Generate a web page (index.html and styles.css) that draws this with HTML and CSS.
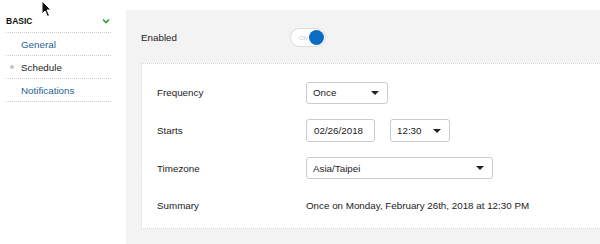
FILE: index.html
```html
<!DOCTYPE html>
<html>
<head>
<meta charset="utf-8">
<link rel="stylesheet" href="styles.css">
</head>
<body>
<div class="page">
  <aside class="sidebar">
    <div class="sec-head"><span>BASIC</span>
      <svg class="chev" width="8" height="6" viewBox="0 0 8 6"><path d="M1 1.5 L4 4.5 L7 1.5" fill="none" stroke="#2e9e3a" stroke-width="1.6"/></svg>
    </div>
    <a class="nav-item link">General</a>
    <div class="nav-item current"><span class="dot"></span>Schedule</div>
    <a class="nav-item link">Notifications</a>
  </aside>
  <main class="panel">
    <div class="row-enabled">
      <span class="label">Enabled</span>
      <span class="toggle"><span class="on">ON</span><span class="knob"></span></span>
    </div>
    <div class="card">
      <div class="frow"><span class="flabel">Frequency</span>
        <div class="sel w-once">Once<span class="caret"></span></div>
      </div>
      <div class="frow"><span class="flabel">Starts</span>
        <div class="ctrls"><div class="inp">02/26/2018</div><div class="sel w-time">12:30<span class="caret"></span></div></div>
      </div>
      <div class="frow"><span class="flabel">Timezone</span>
        <div class="sel w-tz">Asia/Taipei<span class="caret"></span></div>
      </div>
      <div class="frow"><span class="flabel">Summary</span>
        <span class="summary">Once on Monday, February 26th, 2018 at 12:30 PM</span>
      </div>
    </div>
  </main>
</div>
<svg class="cursor" width="12" height="18" viewBox="0 0 12 18"><path d="M1 1 L1 14 L4 11 L6.5 16.5 L8.5 15.5 L6 10 L10 10 Z" fill="#111" stroke="#fff" stroke-width="1"/></svg>
</body>
</html>
```
FILE: styles.css
```css
html, body { margin: 0; padding: 0; background: #fff; }
body { font-family: "Liberation Sans", Arial, sans-serif; font-size: 9.8px; color: #222; width: 600px; height: 244px; overflow: hidden; position: relative; }
.page { display: flex; align-items: flex-start; }
.sidebar { width: 105px; margin-left: 6px; padding-top: 10px; flex: none; }
.sec-head { display: flex; justify-content: space-between; align-items: center; height: 22px; font-size: 8.5px; font-weight: bold; color: #111; border-bottom: 1px dotted #ccc; }
.chev { margin-right: 1px; }
.nav-item { display: flex; align-items: center; height: 22px; padding-left: 15px; border-bottom: 1px dotted #ccc; position: relative; }
.link { color: #1f5f96; }
.current { color: #222; }
.dot { position: absolute; left: 4px; top: 9px; width: 4px; height: 4px; border-radius: 50%; background: #c4c4c4; }
.panel { flex: 1; margin-left: 15px; margin-top: 10px; background: #f3f3f3; height: 234px; padding: 0 0 0 15px; }
.row-enabled { display: flex; align-items: center; height: 55px; }
.label { width: 149px; }
.toggle { display: flex; align-items: center; width: 36px; height: 19px; border: 1px solid #ddd; border-radius: 10px; background: #fff; box-sizing: border-box; padding: 0 1px 0 8px; justify-content: space-between; }
.on { font-size: 6px; color: #c8c8c8; }
.knob { width: 15px; height: 15px; border-radius: 50%; background: #0a6cc2; }
.card { background: #fff; border: 1px dotted #d6d6d6; border-right: none; padding: 10px 0 0 15px; height: 154px; margin-top: -2px; }
.frow { display: flex; align-items: center; height: 37.7px; }
.flabel { width: 149px; flex: none; }
.ctrls { display: flex; gap: 15px; }
.sel, .inp { box-sizing: border-box; height: 22px; border: 1px solid #ccc; border-radius: 3px; background: #fff; display: flex; align-items: center; padding-left: 6px; color: #222; position: relative; }
.inp { width: 69px; height: 23px; padding-left: 7px; }
.w-once { width: 82px; }
.w-time { width: 60px; height: 23px; }
.w-tz { width: 187px; }
.caret { position: absolute; right: 8px; top: 50%; margin-top: -2px; border-left: 4px solid transparent; border-right: 4px solid transparent; border-top: 4px solid #222; }
.summary { color: #222; }
.cursor { position: absolute; left: 41px; top: 0; }
```
